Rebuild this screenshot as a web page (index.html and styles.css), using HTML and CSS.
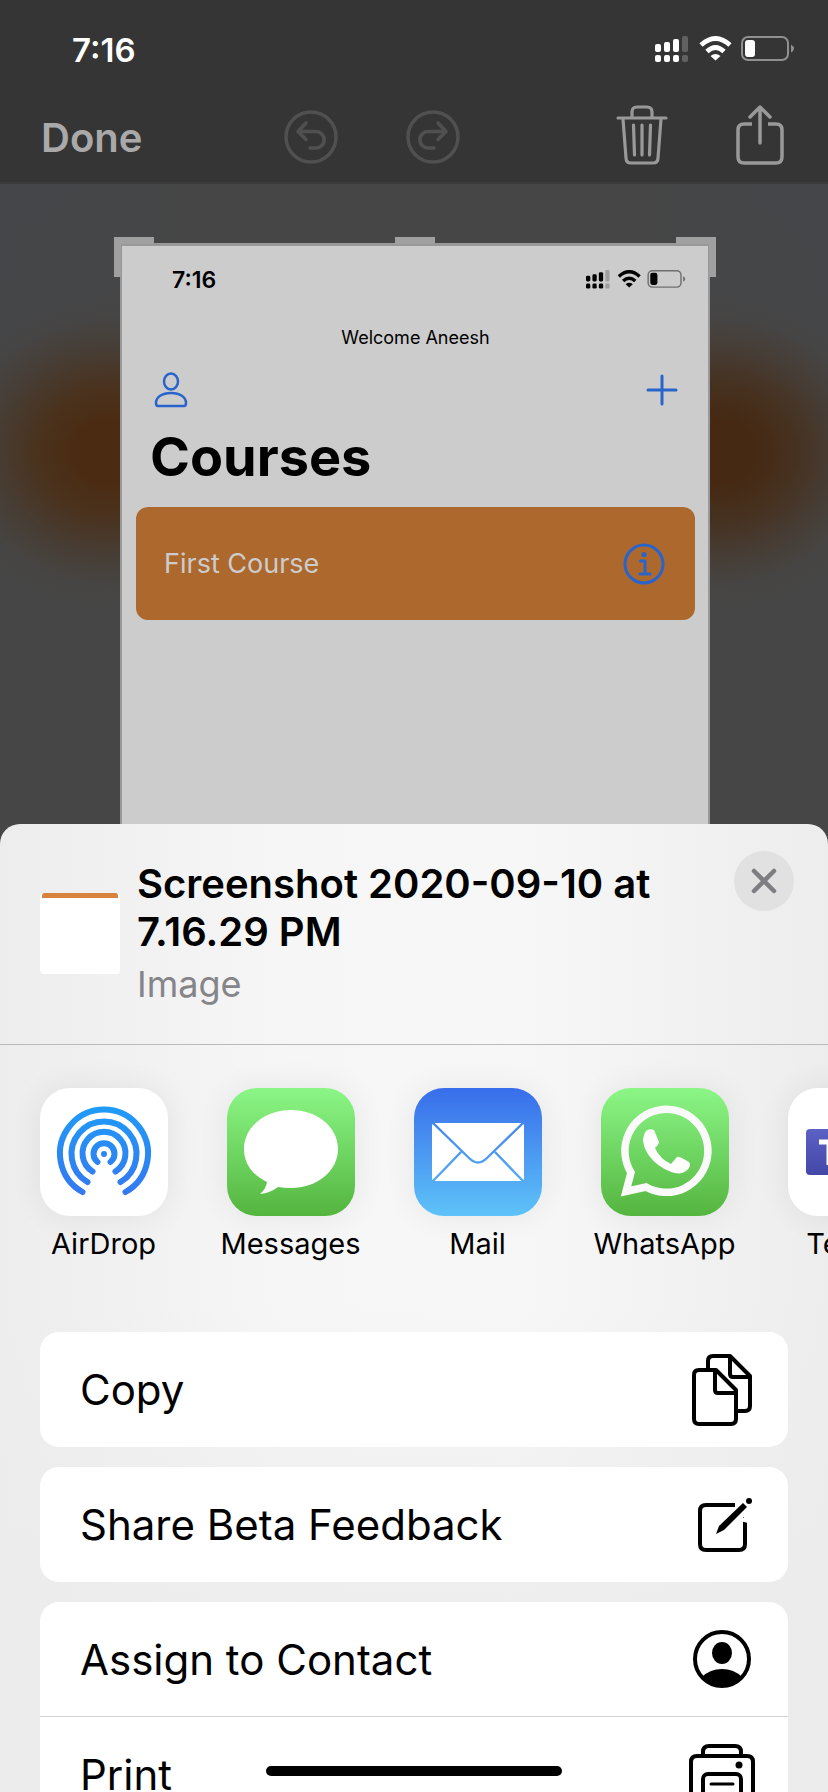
FILE: index.html
```html
<!DOCTYPE html>
<html lang="en">
<head>
<meta charset="utf-8">
<meta name="viewport" content="width=device-width, initial-scale=1">
<title>Share screenshot</title>
<link rel="stylesheet" href="styles.css">
</head>
<body>
<svg class="defs" aria-hidden="true">
  <symbol id="status" viewBox="0 0 140 28">
    <g fill="currentColor">
      <rect x="0" y="8" width="6" height="8" rx="2"/><rect x="9" y="6" width="6" height="10" rx="2"/><rect x="18" y="3" width="6" height="13" rx="2"/>
      <rect x="0" y="19" width="6" height="7" rx="2"/><rect x="9" y="19" width="6" height="7" rx="2"/><rect x="18" y="19" width="6" height="7" rx="2"/>
      <g opacity=".22"><rect x="27" y="0" width="6" height="16" rx="2"/><rect x="27" y="19" width="6" height="7" rx="2"/></g>
      <path d="M60.500 24.500 L55.500 20 Q60.500 16 65.500 20 Z"/>
      <rect x="90" y="4" width="10" height="17" rx="3"/>
    </g>
    <g fill="none" stroke="currentColor" stroke-width="4.800">
      <path d="M46 9 Q60.500 -4 75 9"/><path d="M52 15.500 Q60.500 7.500 69 15.500"/>
    </g>
    <g opacity=".45"><rect x="87" y="1" width="46" height="23" rx="6" fill="none" stroke="currentColor" stroke-width="2"/><path d="M136 8.500 Q142 12.500 136 16.500 Z" fill="currentColor"/></g>
  </symbol>
</svg>
<div class="phone">
  <header class="top">
    <div class="status"><time>7:16</time><svg class="status-icons" aria-hidden="true"><use href="#status"/></svg></div>
    <nav class="toolbar">
      <button class="done">Done</button>
      <div class="history">
        <button aria-label="Undo" disabled><svg width="54" height="54" viewBox="0 0 54 54" fill="none" stroke="currentColor" stroke-width="3.500" stroke-linecap="round" stroke-linejoin="round"><circle cx="27" cy="27" r="25"/><path d="M22 13l-8 8.500 8 8M15 21.500h17a8 8 0 0 1 0 16.500h-6"/></svg></button>
        <button aria-label="Redo" disabled><svg width="54" height="54" viewBox="0 0 54 54" fill="none" stroke="currentColor" stroke-width="3.500" stroke-linecap="round" stroke-linejoin="round"><circle cx="27" cy="27" r="25"/><path d="M32 13l8 8.500-8 8M39 21.500H22a8 8 0 0 0 0 16.500h6"/></svg></button>
      </div>
      <div class="tools">
        <button aria-label="Delete"><svg width="52" height="60" viewBox="0 0 52 60" fill="none" stroke="currentColor" stroke-width="3.200" stroke-linecap="round" stroke-linejoin="round"><path d="M2 13h48M16 12V7q0-5 5-5h10q5 0 5 5v5M7 14l3 39q0 5 5 5h22q5 0 5-5l3-39"/><path d="M17.500 20l1 30M26 20v30M34.500 20l-1 30"/></svg></button>
        <button aria-label="Share"><svg width="48" height="60" viewBox="0 0 48 60" fill="none" stroke="currentColor" stroke-width="3.500" stroke-linecap="round" stroke-linejoin="round"><path d="M24 38V2M14 12L24 2l10 10"/><path d="M16 19H8q-6 0-6 6v27q0 6 6 6h32q6 0 6-6V25q0-6-6-6h-8" stroke-linecap="butt"/></svg></button>
      </div>
    </nav>
  </header>

  <main class="canvas">
    <section class="preview">
      <i class="handle handle-left"></i><i class="handle handle-mid"></i><i class="handle handle-right"></i>
      <div class="mini-status"><time>7:16</time><svg class="mini-icons" aria-hidden="true"><use href="#status"/></svg></div>
      <p class="welcome">Welcome Aneesh</p>
      <div class="mini-nav">
        <svg width="34" height="36" viewBox="0 0 34 36" fill="none" stroke="currentColor" stroke-width="2.500"><ellipse cx="17" cy="9.500" rx="7" ry="8"/><path d="M4 34Q2 34 2 31C2 25 8 21 17 21s15 4 15 10q0 3-2 3Z"/></svg>
        <svg width="32" height="32" viewBox="0 0 32 32" fill="none" stroke="currentColor" stroke-width="3" stroke-linecap="round"><path d="M16 2v28M2 16h28"/></svg>
      </div>
      <h1>Courses</h1>
      <div class="course"><span>First Course</span><svg width="42" height="42" viewBox="0 0 42 42" fill="none" stroke="currentColor" stroke-width="3" stroke-linecap="round" stroke-linejoin="round"><circle cx="21" cy="21" r="19"/><path d="M17.500 18h4.500v13M17 31h10"/><circle cx="21" cy="11.500" r="2.600" fill="currentColor" stroke="none"/></svg></div>
    </section>
  </main>

  <section class="sheet" aria-label="Share sheet">
    <header class="sheet-head">
      <div class="thumb"></div>
      <div class="info"><h2>Screenshot 2020-09-10 at 7.16.29 PM</h2><p>Image</p></div>
      <button class="close" aria-label="Close"><svg width="26" height="26" viewBox="0 0 26 26" stroke="currentColor" stroke-width="4.500" stroke-linecap="round"><path d="M3 3l20 20M23 3L3 23"/></svg></button>
    </header>
    <div class="apps">
      <button class="app"><span class="tile white"><svg viewBox="0 0 128 128" fill="none" stroke="url(#air)" stroke-width="6" stroke-linecap="round"><defs><linearGradient id="air" gradientUnits="userSpaceOnUse" x1="0" y1="20" x2="0" y2="106"><stop stop-color="#1f9bf8"/><stop offset="1" stop-color="#3478f0"/></linearGradient></defs>
        <path d="M42.500 104A44 44 0 1 1 85.500 104M47.500 94A32.500 32.500 0 1 1 80.500 94M52.500 83.500A21.500 21.500 0 1 1 75.500 83.500M57.500 74A10.500 10.500 0 1 1 70.500 74"/><circle cx="64" cy="66" r="3" fill="#2a86f3" stroke="none"/></svg></span>AirDrop</button>
      <button class="app"><span class="tile green"><svg viewBox="0 0 128 128"><path fill="#fff" d="M64 22c26 0 47 17 47 39s-21 39-47 39q-7 0-13-1-8 6-18 7 6-5 7-12C25 87 17 75 17 61c0-22 21-39 47-39Z"/></svg></span>Messages</button>
      <button class="app"><span class="tile blue"><svg viewBox="0 0 128 128"><defs><linearGradient id="mail" gradientUnits="userSpaceOnUse" x1="0" y1="0" x2="0" y2="128"><stop stop-color="#386deb"/><stop offset="1" stop-color="#5ec3f8"/></linearGradient></defs><rect x="18" y="35" width="92" height="58" rx="3" fill="#fff"/><path d="M19 35l36 35q9 9 18 0l36-35M19 93l28-29M109 93L81 64" fill="none" stroke="url(#mail)" stroke-width="2.400"/></svg></span>Mail</button>
      <button class="app"><span class="tile whats"><svg viewBox="0 0 128 128"><path d="M25 103.500L30 84.500A41.500 41.500 0 1 1 45 99Z" fill="none" stroke="#fafafa" stroke-width="7.500"/><path fill="#fff" d="M45 43q3-3 8-1l5 12q0 2-4 6 5 11 16 16l6-7q2-1 12 5 2 2 0 6-5 7-14 5C58 81 43 67 42 52q0-5 3-9Z"/></svg></span>WhatsApp</button>
      <button class="app"><span class="tile white"><svg viewBox="0 0 128 128"><defs><linearGradient id="team" x2="0" y2="1"><stop stop-color="#5c61c5"/><stop offset="1" stop-color="#4347a6"/></linearGradient></defs><rect x="18" y="41" width="46" height="46" rx="4" fill="url(#team)"/><path d="M31 54h20M41 54v23" stroke="#fff" stroke-width="5"/></svg></span>Teams</button>
    </div>
    <div class="actions">
      <div class="group"><button class="action">Copy<svg width="60" height="72" viewBox="0 0 60 72" fill="none" stroke="currentColor" stroke-width="4" stroke-linejoin="round"><path d="M16 15V7q0-5 5-5h17l20 20v30q0 5-5 5H46M38 2v18q0 3 3 3h17M7 16h17l20 20v29q0 5-5 5H7q-5 0-5-5V21q0-5 5-5ZM23 16v20q0 3 3 3h18"/></svg></button></div>
      <div class="group"><button class="action">Share Beta Feedback<svg width="54" height="54" viewBox="0 0 54 54" fill="none" stroke="currentColor" stroke-width="4"><path d="M37 7H8q-6 0-6 6v33q0 6 6 6h33q6 0 6-6V19"/><g fill="currentColor" stroke="none"><path d="M33 9h10l-8 8ZM50 15v10l-8-2Z" fill="#fff"/><path d="M18 36l3-8L45 5l4 4-23 23Z"/><circle cx="51" cy="3" r="3"/></g></svg></button></div>
      <div class="group">
        <button class="action">Assign to Contact<svg width="60" height="60" viewBox="0 0 60 60"><circle cx="30" cy="30" r="27" fill="none" stroke="currentColor" stroke-width="4"/><ellipse cx="30" cy="24" rx="10" ry="11"/><path d="M10 48Q18 40 30 40t20 8A28 28 0 0 1 10 48Z"/></svg></button>
        <button class="action">Print<svg class="print" width="66" height="62" viewBox="0 0 66 62" fill="none" stroke="currentColor" stroke-width="4"><path d="M14 11V8q0-6 6-6h26q6 0 6 6v3M14 54H8q-6 0-6-6V18q0-6 6-6h50q6 0 6 6v30q0 6-6 6h-6"/><rect x="14" y="30" width="38" height="30" rx="5"/><path d="M22 40h22" stroke-width="3" stroke-linecap="round"/><circle cx="50" cy="21" r="3.500" fill="currentColor" stroke="none"/></svg></button>
      </div>
    </div>
  </section>
  <div class="home-bar"></div>
</div>
</body>
</html>
```
FILE: styles.css
```css
* { box-sizing: border-box; }
body { margin: 0; font-family: Inter, "Liberation Sans", sans-serif; color: #000; }
button { padding: 0; border: 0; background: none; font: inherit; color: inherit; }
svg { display: block; flex: none; }
h1, h2, p { margin: 0; }
.defs { position: absolute; width: 0; height: 0; }
.phone { position: relative; height: 100vh; overflow: hidden; display: flex; flex-direction: column; background: #464646; }

.top { flex: none; background: #353535; border-bottom: 2px solid #3c3c3c; }
.status { display: flex; justify-content: space-between; align-items: center; height: 98px; padding: 2px 33px 0 72px; color: #fff; font-size: 33px; font-weight: 600; }
.status-icons { width: 140px; height: 28px; }
.toolbar { display: grid; grid-template-columns: 3fr auto 4fr; align-items: center; height: 84px; padding: 0 44px 6px 41px; color: #a9a9a9; }
.done { justify-self: start; font-size: 40px; font-weight: 600; }
.history { display: flex; gap: 68px; color: #505050; }
.tools { justify-self: end; display: flex; gap: 68px; padding-bottom: 4px; color: #999; }

.canvas {
  flex: none;
  padding: 59px 118px 0 120px;
  background:
    radial-gradient(ellipse 180px 160px at 110px 268px, #4b2c12 0, #4b2c12 20%, #4a301ae0 42%, #48382aa0 64%, #47413c40 84%, #46464600 100%),
    radial-gradient(ellipse 180px 160px at calc(100% - 110px) 268px, #452913 0, #452913 20%, #462e1ae0 42%, #47372aa0 64%, #47413c40 84%, #46464600 100%),
    linear-gradient(#46464600, #464646 45%),
    linear-gradient(90deg, #44464a, #464646 25%, #464646 75%, #44464a);
}
.preview { position: relative; height: 582px; padding: 20px 13px 0 14px; border: solid #989898; border-width: 3px 2px 0; background: #ccc; }
.handle { position: absolute; top: -9px; width: 40px; height: 7px; background: #a0a0a0; }
.handle-left { left: -8px; height: 40px; background: linear-gradient(#a0a0a0, #a0a0a0) 0 0 / 40px 7px no-repeat, linear-gradient(#a0a0a0, #a0a0a0) 0 0 / 7px 40px no-repeat; }
.handle-mid { left: calc(50% - 20px); }
.handle-right { right: -8px; height: 40px; background: linear-gradient(#a0a0a0, #a0a0a0) 0 0 / 40px 7px no-repeat, linear-gradient(#a0a0a0, #a0a0a0) 100% 0 / 7px 40px no-repeat; }
.mini-status { display: flex; justify-content: space-between; align-items: center; height: 28px; padding: 0 9px 0 36px; font-size: 23px; font-weight: 600; }
.mini-icons { width: 100px; height: 20px; }
.welcome { margin-top: 32px; line-height: 24px; font-size: 18px; text-align: center; }
.mini-nav { display: flex; justify-content: space-between; align-items: center; height: 36px; margin-top: 22px; padding: 0 17px 0 18px; color: #2864cc; }
h1 { margin: 13px 0 0 14px; font-size: 54px; line-height: 72px; font-weight: 700; }
.course { display: flex; align-items: center; justify-content: space-between; height: 113px; margin-top: 14px; padding: 0 30px 0 28px; border-radius: 12px; background: #ad682e; color: #2864cc; font-size: 27px; }
.course span { color: #ccc; }

.sheet { flex: 1; min-height: 0; overflow: hidden; border-radius: 20px 20px 0 0; margin-top: -1px; position: relative;
  background: linear-gradient(#ebebeb00 480px, #ebebebcc 800px), linear-gradient(90deg, #ededed, #f6f6f6 35%, #f7f7f7 62%, #ededed); }
.sheet-head { display: flex; align-items: flex-start; height: 221px; padding: 27px 34px 0 40px; border-bottom: 1px solid #bababa; }
.thumb { flex: none; width: 80px; height: 81px; margin-top: 42px; border: solid #fff; border-width: 0 2px; border-radius: 4px; background: linear-gradient(#d8823b 5px, #fff 5px); }
.info { flex: 1; padding: 9px 20px 0 17px; }
h2 { font-size: 40px; line-height: 48px; font-weight: 600; }
.info p { margin-top: 5px; font-size: 36px; line-height: 46px; color: #858589; }
.close { flex: none; display: grid; place-items: center; width: 60px; height: 60px; border-radius: 50%; background: #e1e1e1; color: #7e7e82; }
.apps { display: grid; grid-auto-flow: column; grid-auto-columns: 187px; margin-left: 10px; padding-top: 43px; height: 287px; }
.app { display: flex; flex-direction: column; align-items: center; gap: 10px; font-size: 29px; line-height: 36px; }
.tile { width: 128px; height: 128px; border-radius: 30px; box-shadow: 0 0 32px #00000012; }
.white { background: #fff; }
.green, .whats { background: linear-gradient(#8bf686, #54b53f); }
.blue { background: linear-gradient(#386deb, #5ec3f8); }
.actions { display: grid; gap: 20px; padding: 0 40px; }
.group { overflow: hidden; border-radius: 19px; background: #fff; }
.action { display: flex; align-items: center; justify-content: space-between; width: 100%; height: 115px; padding: 0 36px 0 40px; font-size: 42px; text-align: left; }
.action:not(:last-child) { border-bottom: 1px solid #d2d2d2; }
.print { margin-right: -3px; }
.home-bar { position: absolute; left: 50%; bottom: 16px; width: 296px; height: 10px; margin-left: -148px; border-radius: 5px; background: #000; }
```
